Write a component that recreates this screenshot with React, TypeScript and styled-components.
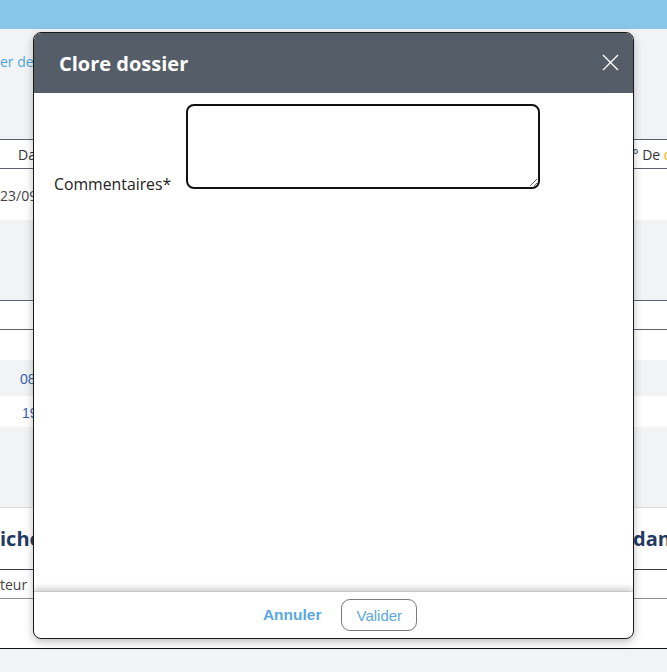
import styled, { createGlobalStyle } from 'styled-components';

const GlobalStyle = createGlobalStyle`
    html, body {
        margin: 0;
        padding: 0;
        background: #f2f3f5;
        font-family: "Open Sans", "Liberation Sans", sans-serif;
    }
    #root {
        min-height: 672px;
    }
`

type RowProps = { $bg?: string; $h: number; $top?: string; $bottom?: string };

const App = () => {
    return (
        <>
            <GlobalStyle />
            <Page>
                <TopBar />
                <Intro>
                    <Link>er des pièces</Link>
                </Intro>
                <Row $h={30} $bg="#fff" $top="#5a626c" $bottom="#5a626c">
                    <LeftCell $pad={18}><HeadText>Date</HeadText></LeftCell>
                    <RightCell $shift={-12}><HeadText>N° De<Accent> dossier</Accent></HeadText></RightCell>
                </Row>
                <Row $h={51} $bg="#fff">
                    <LeftCell><CellText>23/09/2024</CellText></LeftCell>
                </Row>
                <Row $h={80} />
                <Row $h={30} $bg="#fff" $top="#5a626c" $bottom="#5a626c" />
                <Row $h={30} $bg="#fff" />
                <Row $h={36}>
                    <LeftCell $pad={20}><Number>08/10</Number></LeftCell>
                </Row>
                <Row $h={31} $bg="#fff">
                    <LeftCell $pad={22}><Number>19/10</Number></LeftCell>
                </Row>
                <Row $h={80} />
                <Row $h={62} $bg="#fff" $top="#d9dadd">
                    <LeftCell><Heading>iche</Heading></LeftCell>
                    <RightCell $shift={-1}><Heading>dans</Heading></RightCell>
                </Row>
                <Row $h={30} $bg="#fff" $top="#3a3f46" $bottom="#8a9099">
                    <LeftCell><CellText>teur</CellText></LeftCell>
                </Row>
                <Row $h={50} $bg="#fff" $bottom="#111" />
            </Page>

            <Modal role="dialog">
                <ModalHeader>
                    <Title>Clore dossier</Title>
                    <CloseButton aria-label="Fermer">
                        <svg width="17" height="17" viewBox="0 0 17 17">
                            <path d="M1 1 L16 16 M16 1 L1 16" stroke="#fff" strokeWidth="1.4" fill="none" />
                        </svg>
                    </CloseButton>
                </ModalHeader>
                <ModalBody>
                    <Field>
                        <Label>Commentaires*</Label>
                        <TextArea autoFocus />
                    </Field>
                </ModalBody>
                <ModalFooter>
                    <CancelButton>Annuler</CancelButton>
                    <ValidateButton>Valider</ValidateButton>
                </ModalFooter>
            </Modal>
        </>
    )
}

const Page = styled.div`
    display: flex;
    flex-direction: column;
    width: 667px;
    overflow: hidden;
`

const TopBar = styled.div`
    height: 29px;
    background: #87c6e8;
`

const Intro = styled.div`
    height: 110px;
    display: flex;
    align-items: flex-start;
    padding-top: 23px;
    box-sizing: border-box;
`

const Link = styled.span`
    font-size: 14px;
    color: #4ea3de;
    white-space: nowrap;
`

const Row = styled.div<RowProps>`
    height: ${p => p.$h}px;
    box-sizing: border-box;
    background: ${p => p.$bg || '#f2f3f5'};
    border-top: ${p => (p.$top ? `1px solid ${p.$top}` : 'none')};
    border-bottom: ${p => (p.$bottom ? `1px solid ${p.$bottom}` : 'none')};
    display: flex;
    align-items: center;
    justify-content: space-between;
    overflow: hidden;
`

const LeftCell = styled.div<{ $pad?: number }>`
    width: 60px;
    padding-left: ${p => p.$pad ?? 0}px;
    white-space: nowrap;
`

const RightCell = styled.div<{ $shift?: number }>`
    width: 33px;
    white-space: nowrap;
    & > span {
        margin-left: ${p => p.$shift ?? 0}px;
    }
`

const HeadText = styled.span`
    font-size: 14px;
    color: #333;
`

const Accent = styled.span`
    color: #f0b400;
`

const CellText = styled.span`
    font-size: 14px;
    color: #444;
`

const Number = styled.span`
    font-size: 14px;
    color: #3563a8;
    font-family: "Liberation Sans", sans-serif;
`

const Heading = styled.span`
    font-size: 20px;
    font-weight: 700;
    color: #1f3b63;
`

const Modal = styled.div`
    position: absolute;
    left: 33px;
    top: 32px;
    width: 601px;
    height: 607px;
    box-sizing: border-box;
    border: 1.5px solid #1a1a1a;
    border-radius: 8px;
    background: #fff;
    display: flex;
    flex-direction: column;
    overflow: hidden;
    box-shadow: 0 3px 8px rgba(0, 0, 0, 0.25);
`

const ModalHeader = styled.div`
    height: 60px;
    flex-shrink: 0;
    background: #545d68;
    display: flex;
    align-items: center;
    justify-content: space-between;
    padding: 0 14px 0 25px;
`

const Title = styled.h2`
    margin: 0;
    font-size: 20px;
    font-weight: 700;
    color: #fff;
`

const CloseButton = styled.button`
    background: none;
    border: none;
    padding: 0;
    margin-top: -2px;
    line-height: 0;
    cursor: pointer;
`

const ModalBody = styled.div`
    flex: 1;
    padding: 11px 20px 0 20px;
`

const Field = styled.div`
    display: flex;
    align-items: flex-end;
`

const Label = styled.label`
    width: 133px;
    flex-shrink: 0;
    font-size: 15.8px;
    line-height: 20px;
    color: #222;
    margin-bottom: -5px;
`

const TextArea = styled.textarea`
    width: 354px;
    height: 85px;
    margin-left: -1px;
    box-sizing: border-box;
    border: 2px solid #111;
    border-radius: 8px;
    padding: 5px 6px;
    font-family: "Open Sans", sans-serif;
    font-size: 14px;
    outline: none;
`

const ModalFooter = styled.div`
    height: 46px;
    flex-shrink: 0;
    border-top: 1px solid #c8c8c8;
    box-shadow: 0 -3px 6px rgba(0, 0, 0, 0.18);
    display: flex;
    align-items: center;
    justify-content: center;
    gap: 12px;
    padding-left: 5px;
`

const CancelButton = styled.button`
    background: none;
    border: none;
    padding: 0 8px;
    font-family: "Liberation Sans", Arial, sans-serif;
    font-size: 15.5px;
    font-weight: 700;
    color: #5aa8de;
    cursor: pointer;
`

const ValidateButton = styled.button`
    height: 32px;
    padding: 0 14px;
    background: #fff;
    border: 1px solid #7a7a7a;
    border-radius: 9px;
    font-family: "Liberation Sans", Arial, sans-serif;
    font-size: 15px;
    color: #5aa8de;
    cursor: pointer;
`

export default App;
